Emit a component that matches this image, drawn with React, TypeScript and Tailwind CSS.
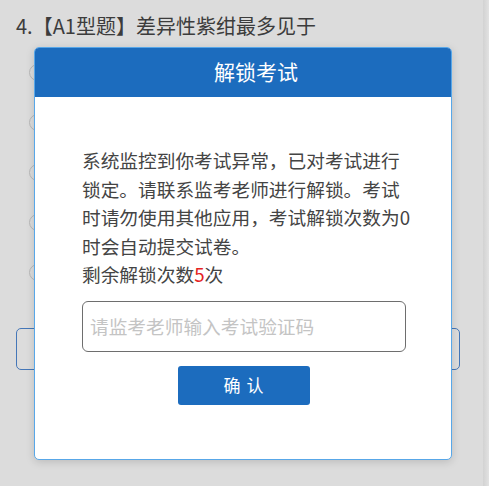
import React from "react";

export default function App() {
  const rows = [0, 1, 2, 3, 4];
  return (
    <div className="relative w-[489px] h-[486px] overflow-hidden bg-[#dcdcdc] font-['Noto_Sans_CJK_SC','Noto_Sans',sans-serif]">
      <div className="flex h-full">
        <div className="flex-1 pl-4 pr-[23px] pt-[10px]">
          <div className="text-[20px] leading-[32px] text-[#3c3c3c] whitespace-nowrap">
            4.【A1型题】差异性紫绀最多见于
          </div>
          <div className="mt-[5px] flex flex-col">
            {rows.map((r) => (
              <div key={r} className="h-[50px] flex items-center pl-[13px]">
                <div className="w-[17px] h-[17px] rounded-full border-[1.5px] border-[#b8b8b8]" />
              </div>
            ))}
          </div>
          <div className="mt-[31px] h-[42px] w-[444px] rounded-[5px] border border-[#4577b8]" />
        </div>
        <div className="w-[6px] h-full bg-gradient-to-r from-[#d2d2d2] to-[#e2e2e2]" />
      </div>

      <div className="absolute left-[34px] top-[47px] w-[418px] h-[413px] rounded-[5px] border border-[#58a7e8] bg-white overflow-hidden shadow-[0_2px_8px_rgba(0,0,0,0.15)] flex flex-col">
        <div className="h-[50px] -mx-px -mt-px bg-[#1c6cbe] flex items-center justify-center pl-[26px] text-white text-[21px] shrink-0">
          解锁考试
        </div>
        <div className="pl-[47px] pt-[49px]">
          <p className="w-[330px] text-[18.7px] leading-[28.5px] text-[#444444]">
            系统监控到你考试异常，已对考试进行锁定。请联系监考老师进行解锁。考试时请勿使用其他应用，考试解锁次数为0时会自动提交试卷。
            <br />
            剩余解锁次数<span className="text-[#e52222]">5</span>次
          </p>
          <div className="mt-[12px] w-[324px] h-[51px] rounded-[6px] border border-[#6e6e6e] flex items-center pl-[7px] pr-2">
            <input
              className="w-full outline-none bg-transparent text-[18.7px] text-[#333] placeholder:text-[#c4c4c4] font-['Noto_Sans_CJK_SC',sans-serif]"
              placeholder="请监考老师输入考试验证码"
            />
          </div>
          <div className="w-[324px] flex justify-center mt-[14px]">
            <button className="w-[132px] h-[39px] rounded-[3px] bg-[#1c6cbe] text-white text-[17px] tracking-[1px]">
              确 认
            </button>
          </div>
        </div>
      </div>
    </div>
  );
}
